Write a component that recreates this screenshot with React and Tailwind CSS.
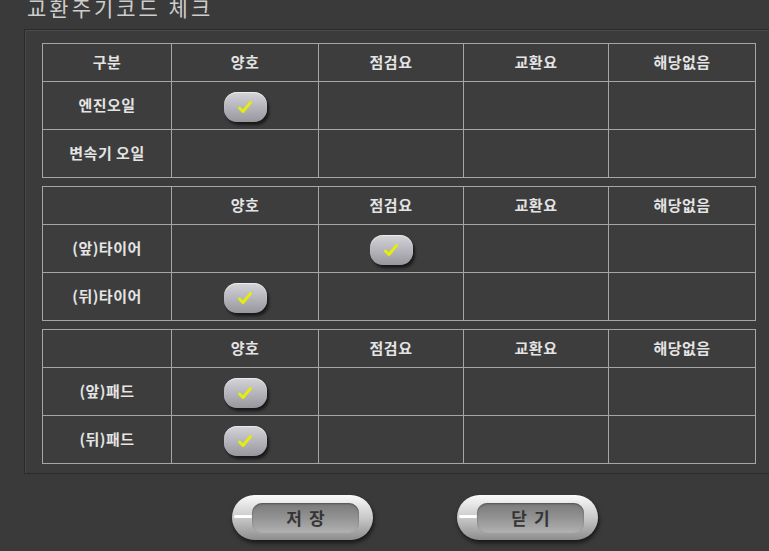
import React from "react";

const COLS = ["w-[129px]", "w-[147px]", "w-[145px]", "w-[145px]", "w-[147px]"];
const HEAD = ["양호", "점검요", "교환요", "해당없음"];

const groups = [
  {
    first: "구분",
    rows: [
      { label: "엔진오일", checked: 0 },
      { label: "변속기 오일", checked: -1 },
    ],
  },
  {
    first: "",
    rows: [
      { label: "(앞)타이어", checked: 1 },
      { label: "(뒤)타이어", checked: 0 },
    ],
  },
  {
    first: "",
    rows: [
      { label: "(앞)패드", checked: 0 },
      { label: "(뒤)패드", checked: 0 },
    ],
  },
];

function CheckPill() {
  return (
    <div className="mx-auto mt-[3px] w-[43px] h-[30px] rounded-[13px] bg-gradient-to-b from-[#d4d4d8] via-[#b6b5bd] to-[#97979c] shadow-[2px_3px_3px_rgba(0,0,0,0.6),inset_0_1px_1px_rgba(255,255,255,0.6)] flex items-center justify-center">
      <svg width="16" height="14" viewBox="0 0 16 14">
        <path d="M2.5 8 L6 11.5 L13.5 2.5" fill="none" stroke="#e4ec10" strokeWidth="3" strokeLinecap="round" strokeLinejoin="round" />
      </svg>
    </div>
  );
}

function CheckTable({ group }) {
  return (
    <table className="border-collapse table-fixed w-[713px] border border-[#a6a6a6] bg-[#3d3d3d]">
      <tbody>
        <tr className="h-[38px]">
          <td className={`${COLS[0]} border border-[#a6a6a6] text-center`}>{group.first}</td>
          {HEAD.map((h, i) => (
            <td key={h} className={`${COLS[i + 1]} border border-[#a6a6a6] text-center`}>{h}</td>
          ))}
        </tr>
        {group.rows.map(row => (
          <tr key={row.label} className="h-[48px]">
            <td className="border border-[#a6a6a6] text-center">{row.label}</td>
            {HEAD.map((h, i) => (
              <td key={h} className="border border-[#a6a6a6] text-center">
                {row.checked === i ? <CheckPill /> : null}
              </td>
            ))}
          </tr>
        ))}
      </tbody>
    </table>
  );
}

function GlossButton({ label }) {
  return (
    <button className="relative w-[141px] h-[45px] rounded-full bg-gradient-to-b from-[#fbfbfb] via-[#c9c9c9] to-[#8e8e8e] shadow-[1px_3px_4px_rgba(0,0,0,0.6)] flex items-center justify-center">
      <span className="absolute left-[2px] top-[20px] w-[18px] h-[3px] bg-white rounded-full"></span>
      <span className="ml-[6px] w-[107px] h-[30px] rounded-[10px] bg-gradient-to-b from-[#7a7a7a] via-[#939393] to-[#b2b2b2] shadow-[inset_0_1px_2px_rgba(0,0,0,0.35)] flex items-center justify-center text-[17px] font-bold text-[#353535] tracking-[7px] pl-[7px]">
        {label}
      </span>
    </button>
  );
}

export default function App() {
  return (
    <div
      className="w-[769px] h-[551px] overflow-hidden bg-[#3a3a3a] text-[#e4e4e4]"
      style={{ fontFamily: '"Noto Sans CJK KR", "Noto Sans", sans-serif' }}
    >
      <h1 className="mt-[-8px] ml-[27px] h-[37px] text-[21px] leading-[30px] tracking-[3px] text-[#cdcdcd] font-normal">
        교환주기코드 체크
      </h1>

      <div className="ml-[24px] w-[760px] border border-[#2a2a2a] shadow-[inset_1px_1px_0_#4a4a4a] bg-[#3b3b3b] pl-[17px] pt-[13px] pb-[9px] flex flex-col gap-[8px] text-[15px] font-bold tracking-[0.5px]">
        {groups.map((g, i) => (
          <CheckTable key={i} group={g} />
        ))}
      </div>

      <div className="flex gap-[84px] pl-[232px] pt-[21px]">
        <GlossButton label="저장" />
        <GlossButton label="닫기" />
      </div>
    </div>
  );
}
